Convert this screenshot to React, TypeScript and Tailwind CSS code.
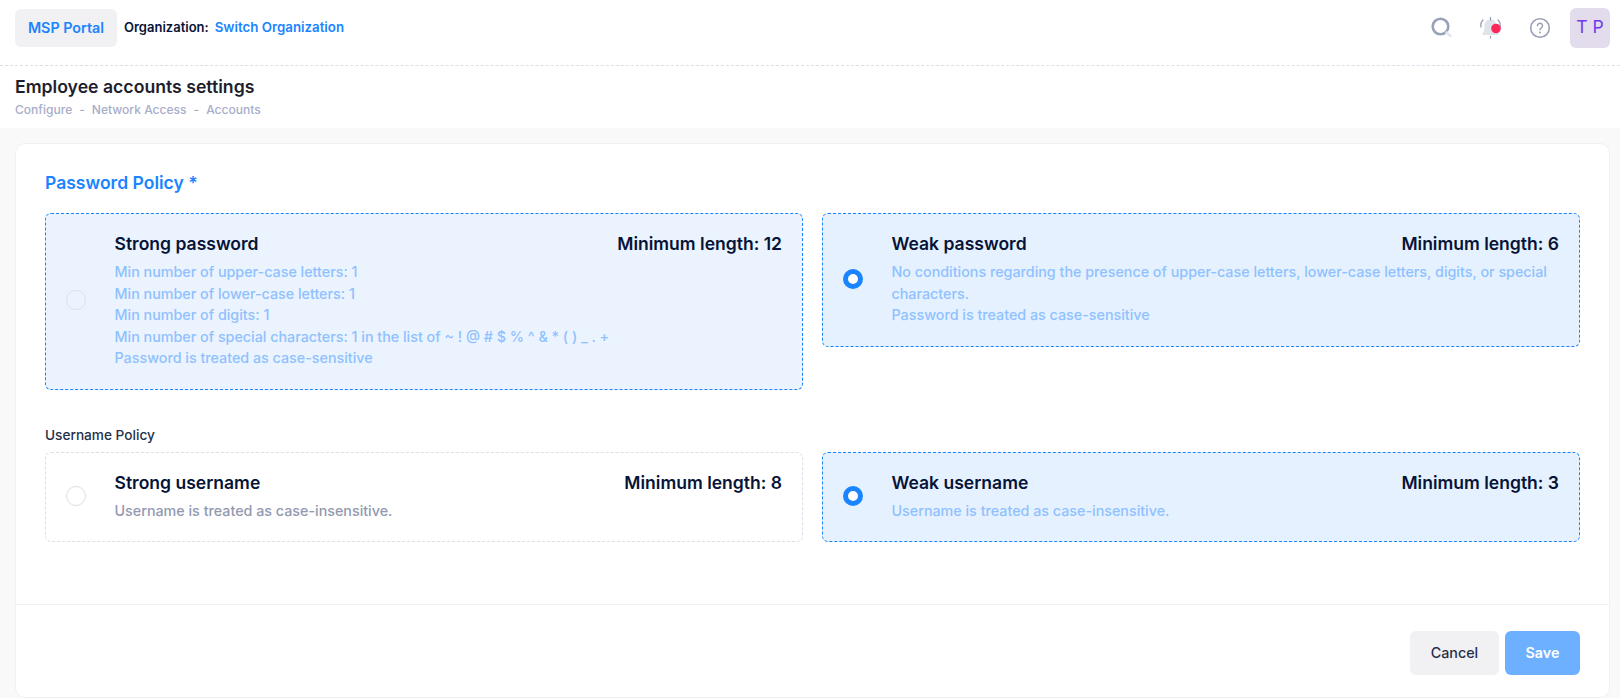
import React from 'react';

const OptionCard = ({
  title,
  minLength,
  lines,
  selected,
  active,
  light,
}: {
  title: string;
  minLength: number;
  lines: string[];
  selected?: boolean;
  active?: boolean;
  light?: boolean;
}) => (
  <div
    className={
      'flex items-center rounded-[6px] border border-dashed pl-[20px] pr-[20px] pt-[18px] pb-[20px] ' +
      (active ? 'border-[#1b84ff] ' + (light ? 'bg-[#ebf3fe]' : 'bg-[#e6f1ff]') : 'border-[#dbdfe9] bg-white')
    }
  >
    <div className="w-[48.5px] shrink-0">
      {selected ? (
        <div className="h-5 w-5 rounded-full border-[5px] border-[#1b84ff] bg-white" />
      ) : (
        <div className="h-5 w-5 rounded-full border border-[#dbdfe9]" />
      )}
    </div>
    <div className="min-w-0 flex-1">
      <div className="flex items-center justify-between text-[17.55px] font-semibold leading-[24px] text-[#071437]">
        <span>{title}</span>
        <span>Minimum length: {minLength}</span>
      </div>
      <div
        className={
          'mt-[5px] text-[14.3px] font-medium leading-[21.5px] ' + (active ? 'text-[#8fc1ff]' : 'text-[#9299b0]')
        }
      >
        {lines.map((line) => (
          <div key={line}>{line}</div>
        ))}
      </div>
    </div>
  </div>
);

const SearchIcon = () => (
  <svg width="24" height="24" viewBox="0 0 24 24" fill="none">
    <circle cx="10.5" cy="10.5" r="7.8" stroke="#99a1b7" strokeWidth="2.6" />
    <path d="M16.500 16.500l4 3.500" stroke="#e4e6ef" strokeWidth="2.6" strokeLinecap="round" />
  </svg>
);

const BellIcon = () => (
  <svg width="26" height="26" viewBox="0 0 26 26" fill="none">
    <path d="M11.500 4.500C7 4.500 5.500 8 5.500 12c0 3-1 5.500-2.500 8h17c-1.500-2.500-2.500-5-2.500-8C17.500 8 16 4.500 11.500 4.500z" fill="#e1e3ea" />
    <path d="M11.500 2.500V5M11.500 21.500V23" stroke="#99a1b7" strokeWidth="1.300" strokeLinecap="round" />
    <path d="M4 5C2 7 1.500 10 2 12M19 5c2 2 2.500 5 2 7" stroke="#99a1b7" strokeWidth="1.300" strokeLinecap="round" />
    <circle cx="17" cy="13.500" r="4.800" fill="#f8285a" />
  </svg>
);

const HelpIcon = () => (
  <svg width="22" height="22" viewBox="0 0 22 22" fill="none">
    <circle cx="11" cy="11" r="9.300" stroke="#99a1b7" strokeWidth="1.600" />
    <path d="M8.500 8.700a2.500 2.500 0 1 1 3.800 2.100c-.9.6-1.300 1-1.300 2" stroke="#99a1b7" strokeWidth="1.500" strokeLinecap="round" />
    <circle cx="11" cy="15.500" r="1" fill="#99a1b7" />
  </svg>
);

export default function App() {
  return (
    <div className="flex h-[698px] flex-col overflow-hidden bg-[#f9f9f9] font-['Inter',sans-serif]">
      <div className="bg-white">
        <header className="flex h-[66px] items-center justify-between border-b border-dashed border-[#dbdfe9] pb-[10px] pl-[15px] pr-[10px]">
          <div className="flex items-center">
            <div className="flex h-[38px] w-[102px] items-center justify-center rounded-[6px] bg-[#f1f1f4] text-[14.3px] font-semibold text-[#1b84ff]">
              MSP Portal
            </div>
            <span className="ml-[7px] text-[13px] font-semibold text-[#071437]">Organization:</span>
            <span className="ml-[6px] text-[13.3px] font-semibold text-[#1b84ff]">Switch Organization</span>
          </div>
          <div className="flex items-center">
            <SearchIcon />
            <div className="ml-[25px]">
              <BellIcon />
            </div>
            <div className="ml-[24px]">
              <HelpIcon />
            </div>
            <div className="ml-[19px] flex h-10 w-10 items-center justify-center rounded-[6px] bg-[#e2dcec] text-[17.55px] text-[#7239ea]">
              T P
            </div>
          </div>
        </header>
        <div className="h-[62px] pl-[15px] pt-[11px]">
          <h1 className="text-[17.65px] font-semibold leading-[20px] text-[#1e1e2d]">Employee accounts settings</h1>
          <div className="mt-[5px] flex gap-[7px] text-[12.05px] font-medium leading-[15px] text-[#a8adc8]">
            <span>Configure</span>
            <span>-</span>
            <span>Network Access</span>
            <span>-</span>
            <span>Accounts</span>
          </div>
        </div>
      </div>

      <main className="ml-[15px] mr-[10px] mt-[15px] flex-1 rounded-[10px] border border-[#f1f1f4] bg-white">
        <div className="h-[461px] border-b border-[#f1f1f4] px-[29px] pt-[27px]">
          <h2 className="text-[17.55px] font-semibold leading-[24px] text-[#1b84ff]">Password Policy *</h2>
          <div className="mt-[18px] grid grid-cols-2 items-start gap-[19px]">
            <OptionCard
              active
              light
              title="Strong password"
              minLength={12}
              lines={[
                'Min number of upper-case letters: 1',
                'Min number of lower-case letters: 1',
                'Min number of digits: 1',
                'Min number of special characters: 1 in the list of ~ ! @ # $ % ^ & * ( ) _ . +',
                'Password is treated as case-sensitive',
              ]}
            />
            <OptionCard
              active
              selected
              title="Weak password"
              minLength={6}
              lines={[
                'No conditions regarding the presence of upper-case letters, lower-case letters, digits, or special characters.',
                'Password is treated as case-sensitive',
              ]}
            />
          </div>
          <div className="mt-[37px] text-[13.65px] font-medium leading-[16px] text-[#252f4a]">Username Policy</div>
          <div className="mt-[9px] grid grid-cols-2 items-start gap-[19px]">
            <OptionCard title="Strong username" minLength={8} lines={['Username is treated as case-insensitive.']} />
            <OptionCard active selected title="Weak username" minLength={3} lines={['Username is treated as case-insensitive.']} />
          </div>
        </div>
        <div className="flex justify-end gap-[6px] pr-[29px] pt-[26px]">
          <button className="h-11 w-[89px] rounded-[6px] bg-[#f1f1f4] text-[14.3px] font-medium text-[#252f4a]">Cancel</button>
          <button className="h-11 w-[75px] rounded-[6px] bg-[#6cb0ff] text-[14.3px] font-semibold text-white">Save</button>
        </div>
      </main>
    </div>
  );
}
